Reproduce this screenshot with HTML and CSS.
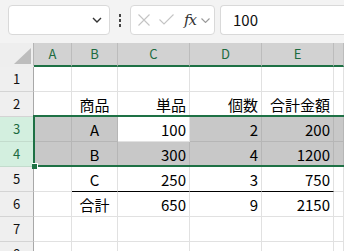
FILE: index.html
```html
<!DOCTYPE html>
<html lang="ja">
<head>
  <meta charset="UTF-8">
  <meta name="viewport" content="width=device-width, initial-scale=1.0">
  <title>Sheet</title>
  <link rel="stylesheet" href="styles.css">
</head>
<body>
  <div class="formula-bar">
    <div class="name-box">
      <svg width="10" height="6" viewBox="0 0 10 6"><path d="M1 1 L5 5 L9 1" fill="none" stroke="#333" stroke-width="1.4"/></svg>
    </div>
    <div class="dots"><span></span><span></span><span></span></div>
    <div class="fx-box">
      <svg width="12" height="12" viewBox="0 0 12 12"><path d="M0.5 0.5 L11.5 11.5 M11.5 0.5 L0.5 11.5" stroke="#c4c4c4" stroke-width="1.1"/></svg>
      <svg width="15" height="11" viewBox="0 0 15 11"><path d="M0.5 5.5 L5 10 L14.5 0.5" fill="none" stroke="#c4c4c4" stroke-width="1.1"/></svg>
      <span class="fx">fx</span>
      <svg width="9" height="5" viewBox="0 0 9 5"><path d="M0.5 0.5 L4.5 4.5 L8.5 0.5" fill="none" stroke="#9a9a9a" stroke-width="1.1"/></svg>
    </div>
    <div class="formula-input">100</div>
  </div>

  <div class="sheet">
    <!-- column headers -->
    <div class="corner"><span class="triangle"></span></div>
    <div class="col-head">A</div>
    <div class="col-head">B</div>
    <div class="col-head">C</div>
    <div class="col-head">D</div>
    <div class="col-head">E</div>
    <div class="col-head"></div>

    <!-- row 1 -->
    <div class="row-head">1</div>
    <div class="cell"></div><div class="cell"></div><div class="cell"></div><div class="cell"></div><div class="cell"></div><div class="cell"></div>

    <!-- row 2 -->
    <div class="row-head">2</div>
    <div class="cell"></div>
    <div class="cell center">商品</div>
    <div class="cell right">単品</div>
    <div class="cell right">個数</div>
    <div class="cell right">合計金額</div>
    <div class="cell"></div>

    <!-- row 3 -->
    <div class="row-head selected">3</div>
    <div class="cell shaded"></div>
    <div class="cell shaded center">A</div>
    <div class="cell active right">100</div>
    <div class="cell shaded right">2</div>
    <div class="cell shaded right">200</div>
    <div class="cell shaded"></div>

    <!-- row 4 -->
    <div class="row-head selected">4</div>
    <div class="cell shaded"></div>
    <div class="cell shaded center">B</div>
    <div class="cell shaded right">300</div>
    <div class="cell shaded right">4</div>
    <div class="cell shaded right">1200</div>
    <div class="cell shaded"></div>

    <!-- row 5 -->
    <div class="row-head">5</div>
    <div class="cell"></div>
    <div class="cell center total-line">C</div>
    <div class="cell right total-line">250</div>
    <div class="cell right total-line">3</div>
    <div class="cell right total-line">750</div>
    <div class="cell"></div>

    <!-- row 6 -->
    <div class="row-head">6</div>
    <div class="cell"></div>
    <div class="cell center">合計</div>
    <div class="cell right">650</div>
    <div class="cell right">9</div>
    <div class="cell right">2150</div>
    <div class="cell"></div>

    <!-- row 7 -->
    <div class="row-head">7</div>
    <div class="cell"></div><div class="cell"></div><div class="cell"></div><div class="cell"></div><div class="cell"></div><div class="cell"></div>

    <!-- row 8 -->
    <div class="row-head">8</div>
    <div class="cell"></div><div class="cell"></div><div class="cell"></div><div class="cell"></div><div class="cell"></div><div class="cell"></div>

    <div class="selection"><span class="fill-handle"></span></div>
  </div>
</body>
</html>
```

FILE: styles.css
```css
* {
  margin: 0px;
  padding: 0px;
  box-sizing: border-box;
}

body {
  width: 344px;
  height: 251px;
  overflow: hidden;
  background-color: #fff;
  font-family: "Noto Sans CJK JP", "Noto Sans", sans-serif;
  color: #000;
}

/* formula bar */

.formula-bar {
  height: 43px;
  background-color: #f3f3f3;
  display: flex;
  align-items: flex-start;
  padding: 5px 0px 0px 8px;
}

.name-box {
  width: 102px;
  height: 30px;
  background-color: #fff;
  border: 1px solid #d9d9d9;
  border-radius: 4px;
  display: flex;
  align-items: center;
  justify-content: flex-end;
  padding-right: 7px;
}

.dots {
  width: 20px;
  height: 30px;
  display: flex;
  flex-direction: column;
  align-items: center;
  justify-content: center;
  gap: 2px;
}

.dots span {
  width: 2px;
  height: 3px;
  background-color: #444;
}

.fx-box {
  width: 85px;
  height: 30px;
  background-color: #fff;
  border: 1px solid #d9d9d9;
  border-radius: 4px;
  display: flex;
  align-items: center;
  padding-left: 7px;
  gap: 9px;
}

.fx-box svg:nth-child(2) {
  margin-left: 0px;
  margin-top: -1px;
}

.fx {
  font-family: "DejaVu Serif", "Liberation Serif", serif;
  font-style: italic;
  font-size: 15px;
  color: #333;
  letter-spacing: -1px;
  margin-left: 1px;
  margin-right: -4px;
}

.formula-input {
  flex: 1;
  height: 30px;
  margin-left: 5px;
  background-color: #fff;
  border: 1px solid #d9d9d9;
  border-right: none;
  border-radius: 4px 0px 0px 4px;
  font-size: 15px;
  line-height: 28px;
  padding-left: 12px;
  color: #111;
}

/* sheet grid */

.sheet {
  position: relative;
  display: grid;
  grid-template-columns: 34px 38px 46px 72px 72px 72px 1fr;
  grid-template-rows: 24px;
  grid-auto-rows: 25px;
}

.corner {
  position: relative;
  background-color: #eeeeee;
  border-right: 1px solid #b5b5b5;
  border-bottom: 2px solid #eeeeee;
}

.triangle {
  position: absolute;
  right: 2px;
  bottom: 1px;
  width: 0px;
  height: 0px;
  border-left: 17px solid transparent;
  border-bottom: 16px solid #bdbdbd;
}

.col-head {
  background-color: #d2d2d2;
  border-right: 1px solid #bcbcbc;
  border-bottom: 2px solid #1e7145;
  color: #1c6b3f;
  font-size: 13px;
  text-align: center;
  line-height: 22px;
}

.row-head {
  background-color: #efefef;
  border-right: 1px solid #a8a8a8;
  border-bottom: 1px solid #d4d4d4;
  font-size: 13px;
  text-align: center;
  line-height: 24px;
  color: #111;
}

.row-head.selected {
  background-color: #d3efdf;
  color: #1c6b3f;
  border-bottom-color: #c3dccd;
}

.cell {
  border-right: 1px solid #e1e1e1;
  border-bottom: 1px solid #e1e1e1;
  font-size: 15px;
  line-height: 24px;
  padding: 1px 3px 0px 3px;
  white-space: nowrap;
  overflow: hidden;
}

.cell.center {
  text-align: center;
}

.cell.right {
  text-align: right;
}

.cell.shaded {
  background-color: #c8c8c8;
  border-right-color: #b6b6b6;
  border-bottom-color: #b6b6b6;
}

.cell.active {
  background-color: #fff;
}

.cell.total-line {
  border-bottom-color: #000;
}

/* selection outline over rows 3-4 */

.selection {
  position: absolute;
  grid-row: 4 / 6;
  grid-column: 2 / -1;
  top: -2px;
  left: -1px;
  right: -4px;
  bottom: 0px;
  border: 2px solid #1e7145;
  pointer-events: none;
}

.fill-handle {
  position: absolute;
  left: -3px;
  bottom: -4px;
  width: 6px;
  height: 6px;
  background-color: #1e7145;
  border: 1px solid #fff;
  border-left: none;
  border-bottom: none;
}
```
